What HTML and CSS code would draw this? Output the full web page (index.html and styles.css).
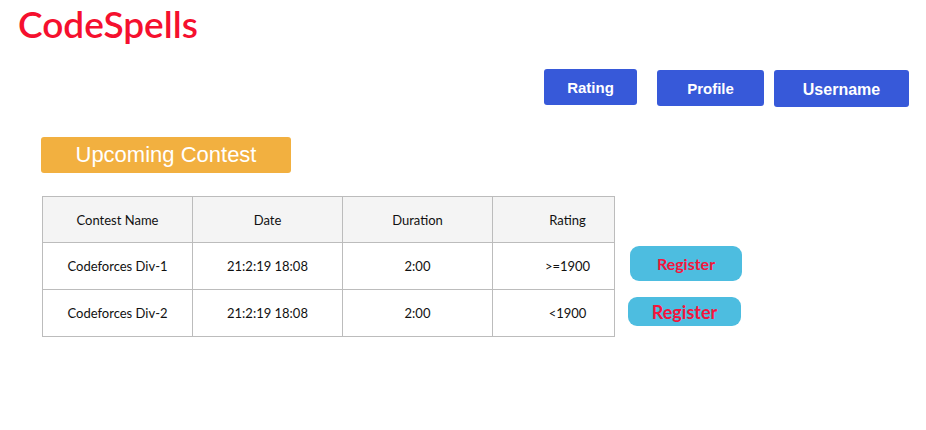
FILE: index.html
```html
<!DOCTYPE html>
<html>
<head>
<meta charset="utf-8">
<link rel="stylesheet" href="styles.css">
</head>
<body>
<header class="top">
  <div class="logo">CodeSpells</div>
</header>
<nav class="nav">
  <button class="nav-btn rating">Rating</button>
  <button class="nav-btn profile">Profile</button>
  <button class="nav-btn user">Username</button>
</nav>
<div class="section-title">Upcoming Contest</div>
<div class="contest-area">
  <table class="contests">
    <thead>
      <tr><th>Contest Name</th><th>Date</th><th>Duration</th><th class="rate">Rating</th></tr>
    </thead>
    <tbody>
      <tr><td>Codeforces Div-1</td><td>21:2:19 18:08</td><td>2:00</td><td class="rate">&gt;=1900</td></tr>
      <tr><td>Codeforces Div-2</td><td>21:2:19 18:08</td><td>2:00</td><td class="rate">&lt;1900</td></tr>
    </tbody>
  </table>
  <div class="reg-col">
    <button class="reg reg1">Register</button>
    <button class="reg reg2">Register</button>
  </div>
</div>
</body>
</html>
```
FILE: styles.css
```css
* { box-sizing: border-box; }
body {
  margin: 0;
  background: #fff;
  font-family: "Lato", "Liberation Sans", sans-serif;
  width: 926px;
  height: 430px;
  overflow: hidden;
}
.top { padding: 4px 0 0 18px; height: 48px; }
.logo {
  color: #f5102e;
  font-family: "Lato", sans-serif;
  font-weight: 600;
  font-size: 37px;
  line-height: 40px;
}
.nav {
  display: flex;
  align-items: flex-start;
  padding-left: 544px;
  margin-top: 21px;
}
.nav-btn {
  border: none;
  background: #3759d9;
  color: #fff;
  font-family: "Liberation Sans", Arial, sans-serif;
  font-weight: bold;
  font-size: 15px;
  border-radius: 3px;
  padding: 0;
}
.rating { width: 93px; height: 36px; }
.profile { width: 107px; height: 36px; margin: 1px 0 0 20px; }
.user { width: 135px; height: 37px; margin: 1px 0 0 10px; font-size: 16px; padding-top: 2px; }
.section-title {
  margin: 30px 0 0 41px;
  width: 250px;
  height: 36px;
  background: #f2b040;
  color: #fff;
  border-radius: 3px;
  font-family: "Liberation Sans", Arial, sans-serif;
  font-size: 22px;
  line-height: 36px;
  text-align: center;
}
.contest-area {
  display: flex;
  margin: 23px 0 0 42px;
}
.contests {
  border-collapse: collapse;
  width: 573px;
  font-size: 13px;
  color: #111;
  table-layout: fixed;
}
.contests th, .contests td {
  border: 1px solid #bcbcbc;
  text-align: center;
  font-weight: normal;
  width: 150px;
  height: 47px;
  padding: 0;
}
.contests th { background: #f4f4f4; height: 46px; }
.contests th.rate, .contests td.rate { width: 122px; padding-left: 28px; }
.reg-col {
  display: flex;
  flex-direction: column;
  padding-top: 50px;
}
.reg {
  border: none;
  background: #4dbde0;
  color: #f5143c;
  font-family: "Lato", sans-serif;
  font-weight: bold;
  border-radius: 9px;
  padding: 0;
}
.reg1 { width: 112px; height: 35px; margin-left: 15px; font-size: 16px; }
.reg2 { width: 113px; height: 29px; margin: 16px 0 0 13px; font-size: 18px; }
```
